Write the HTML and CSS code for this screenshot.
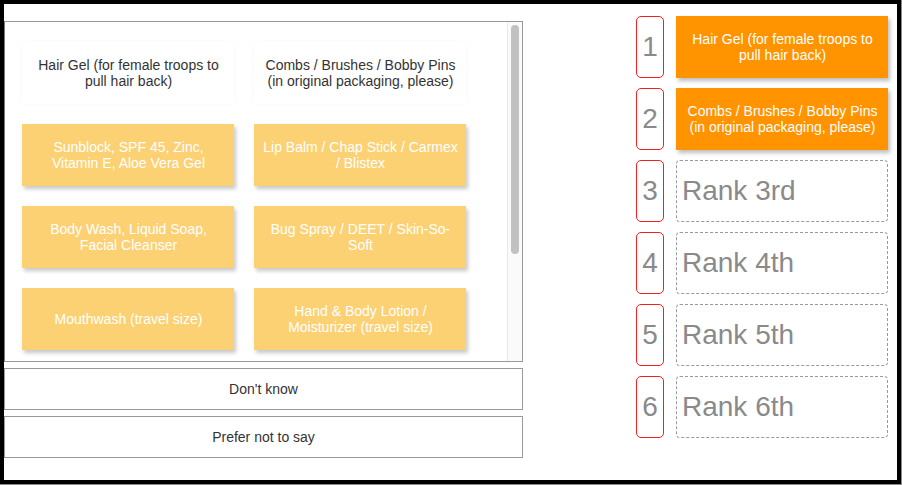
FILE: index.html
```html
<!DOCTYPE html>
<html>
<head>
<meta charset="utf-8">
<title>Rank items</title>
<link rel="stylesheet" href="styles.css">
</head>
<body>
<div class="frame">
  <div class="left">
    <div class="pool">
      <div class="grid">
        <div class="card placeholder">Hair Gel (for female troops to pull hair back)</div>
        <div class="card placeholder">Combs / Brushes / Bobby Pins (in original packaging, please)</div>
        <div class="card item">Sunblock, SPF 45, Zinc, Vitamin E, Aloe Vera Gel</div>
        <div class="card item">Lip Balm / Chap Stick / Carmex / Blistex</div>
        <div class="card item">Body Wash, Liquid Soap, Facial Cleanser</div>
        <div class="card item">Bug Spray / DEET / Skin-So-Soft</div>
        <div class="card item">Mouthwash (travel size)</div>
        <div class="card item">Hand &amp; Body Lotion / Moisturizer (travel size)</div>
      </div>
      <div class="scrollbar"><div class="thumb"></div></div>
    </div>
    <div class="option">Don't know</div>
    <div class="option">Prefer not to say</div>
  </div>
  <div class="ranks">
    <div class="rank-row"><div class="rank-num">1</div><div class="card ranked">Hair Gel (for female troops to pull hair back)</div></div>
    <div class="rank-row"><div class="rank-num">2</div><div class="card ranked">Combs / Brushes / Bobby Pins (in original packaging, please)</div></div>
    <div class="rank-row"><div class="rank-num">3</div><div class="slot">Rank 3rd</div></div>
    <div class="rank-row"><div class="rank-num">4</div><div class="slot">Rank 4th</div></div>
    <div class="rank-row"><div class="rank-num">5</div><div class="slot">Rank 5th</div></div>
    <div class="rank-row"><div class="rank-num">6</div><div class="slot">Rank 6th</div></div>
  </div>
</div>
</body>
</html>
```

FILE: styles.css
```css
html {
  background: #8a8a8a;
}
body {
  margin: 0;
  font-family: "Liberation Sans", Arial, Helvetica, sans-serif;
  font-size: 14px;
  color: #333;
}
.frame {
  box-sizing: border-box;
  width: 901px;
  height: 484px;
  background: #fff;
  border: 4px solid #000;
  display: flex;
  gap: 113px;
}
.left {
  width: 519px;
  padding-top: 17px;
  display: flex;
  flex-direction: column;
  gap: 6px;
}
.pool {
  box-sizing: border-box;
  height: 341px;
  border: 1px solid #999;
  border-left-color: #777;
  overflow: hidden;
  display: flex;
}
.grid {
  flex: 1;
  display: grid;
  grid-template-columns: 212px 212px;
  grid-auto-rows: 62px;
  column-gap: 20px;
  row-gap: 20px;
  align-content: start;
  padding: 20px 0 0 17px;
}
.scrollbar {
  box-sizing: border-box;
  width: 15px;
  background: #fafafa;
  border-left: 1px solid #e8e8e8;
  padding: 3px 3px 0 3px;
}
.thumb {
  height: 229px;
  background: #c1c1c1;
  border-radius: 4px;
}
.card {
  box-sizing: border-box;
  display: flex;
  align-items: center;
  justify-content: center;
  text-align: center;
  padding: 0 8px 0 9px;
  line-height: 16.5px;
  height: 62px;
}
.placeholder {
  background: #fff;
  color: #333;
  box-shadow: 0 0 8px rgba(0, 0, 0, 0.025);
}
.item {
  background: #fcd174;
  color: #fff;
  box-shadow: 2px 3px 4px rgba(0, 0, 0, 0.22);
}
.option {
  box-sizing: border-box;
  height: 42px;
  border: 1px solid #999;
  display: flex;
  align-items: center;
  justify-content: center;
  color: #333;
}
.ranks {
  padding-top: 12px;
  display: flex;
  flex-direction: column;
  gap: 10px;
}
.rank-row {
  display: flex;
  gap: 12px;
}
.rank-num {
  box-sizing: border-box;
  width: 28px;
  height: 62px;
  border: 1px solid #f02020;
  border-radius: 5px;
  display: flex;
  align-items: center;
  justify-content: center;
  font-size: 28px;
  color: #8a8a8a;
}
.ranked {
  width: 212px;
  background: #ff9400;
  color: #fff;
  box-shadow: 2px 3px 4px rgba(0, 0, 0, 0.25);
}
.slot {
  box-sizing: border-box;
  width: 212px;
  height: 62px;
  border: 1px dashed #999;
  border-radius: 4px;
  display: flex;
  align-items: center;
  padding-left: 5px;
  font-size: 28px;
  color: #8a8a8a;
}
```
